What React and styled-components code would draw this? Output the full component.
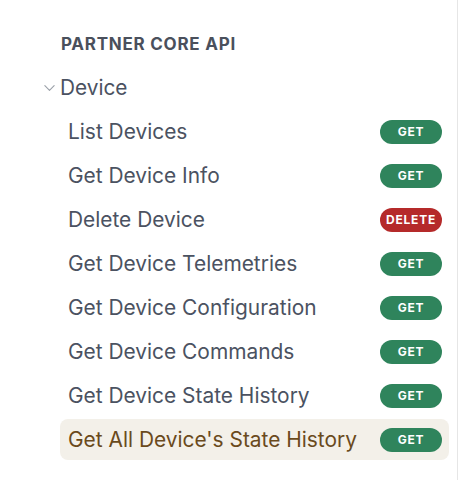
import React from "react";
import styled, { createGlobalStyle } from "styled-components";

const Global = createGlobalStyle`
  html, body { margin: 0; padding: 0; background: #ffffff; }
  body { font-family: Inter, "Noto Sans", sans-serif; -webkit-font-smoothing: antialiased; }
`;

const Sidebar = styled.nav`
  width: 458px;
  height: 480px;
  box-sizing: border-box;
  border-right: 1px solid #e6e6e6;
  padding: 33px 8px 0 40px;
`;

const Heading = styled.div`
  font-size: 17px;
  font-weight: 700;
  letter-spacing: 0.75px;
  color: #4a505c;
  text-transform: uppercase;
  padding-left: 21px;
  height: 22px;
  line-height: 22px;
  margin-bottom: 12px;
`;

const Group = styled.div`
  display: flex;
  align-items: center;
  height: 41px;
  gap: 4px;
  font-size: 20.8px;
  color: #4b5261;
  margin-bottom: 3px;
`;

const Chevron = styled.svg`
  width: 13px;
  height: 13px;
  margin-left: 3px;
  color: #9aa0a8;
`;

const List = styled.ul`
  list-style: none;
  margin: 0;
  padding: 0 0 0 20px;
  display: flex;
  flex-direction: column;
  gap: 3px;
`;

const Item = styled.li`
  display: flex;
  align-items: center;
  justify-content: space-between;
  height: 41px;
  padding: 0 7px 0 8px;
  border-radius: 8px;
  font-size: 20.9px;
  color: ${(p) => (p.$active ? "#6a4a1c" : "#4b5261")};
  background: ${(p) => (p.$active ? "#f3f0e9" : "transparent")};
`;

const Badge = styled.span`
  display: inline-flex;
  align-items: center;
  justify-content: center;
  width: 62px;
  height: 24px;
  border-radius: 12px;
  font-size: 12px;
  font-weight: 700;
  letter-spacing: 0.8px;
  color: #ffffff;
  background: ${(p) => (p.$method === "DELETE" ? "#b52a2a" : "#2f845c")};
`;

const items = [
  ["List Devices", "GET"],
  ["Get Device Info", "GET"],
  ["Delete Device", "DELETE"],
  ["Get Device Telemetries", "GET"],
  ["Get Device Configuration", "GET"],
  ["Get Device Commands", "GET"],
  ["Get Device State History", "GET"],
  ["Get All Device's State History", "GET"],
];

export default function App() {
  return (
    <>
      <Global />
      <Sidebar>
        <Heading>Partner Core API</Heading>
        <Group>
          <Chevron viewBox="0 0 14 14" fill="none" stroke="currentColor" strokeWidth="1.2" strokeLinecap="round" strokeLinejoin="round">
            <path d="M2 5l5 5 5-5" />
          </Chevron>
          Device
        </Group>
        <List>
          {items.map(([label, method], i) => (
            <Item key={label} $active={i === items.length - 1}>
              <span>{label}</span>
              <Badge $method={method}>{method}</Badge>
            </Item>
          ))}
        </List>
      </Sidebar>
    </>
  );
}
